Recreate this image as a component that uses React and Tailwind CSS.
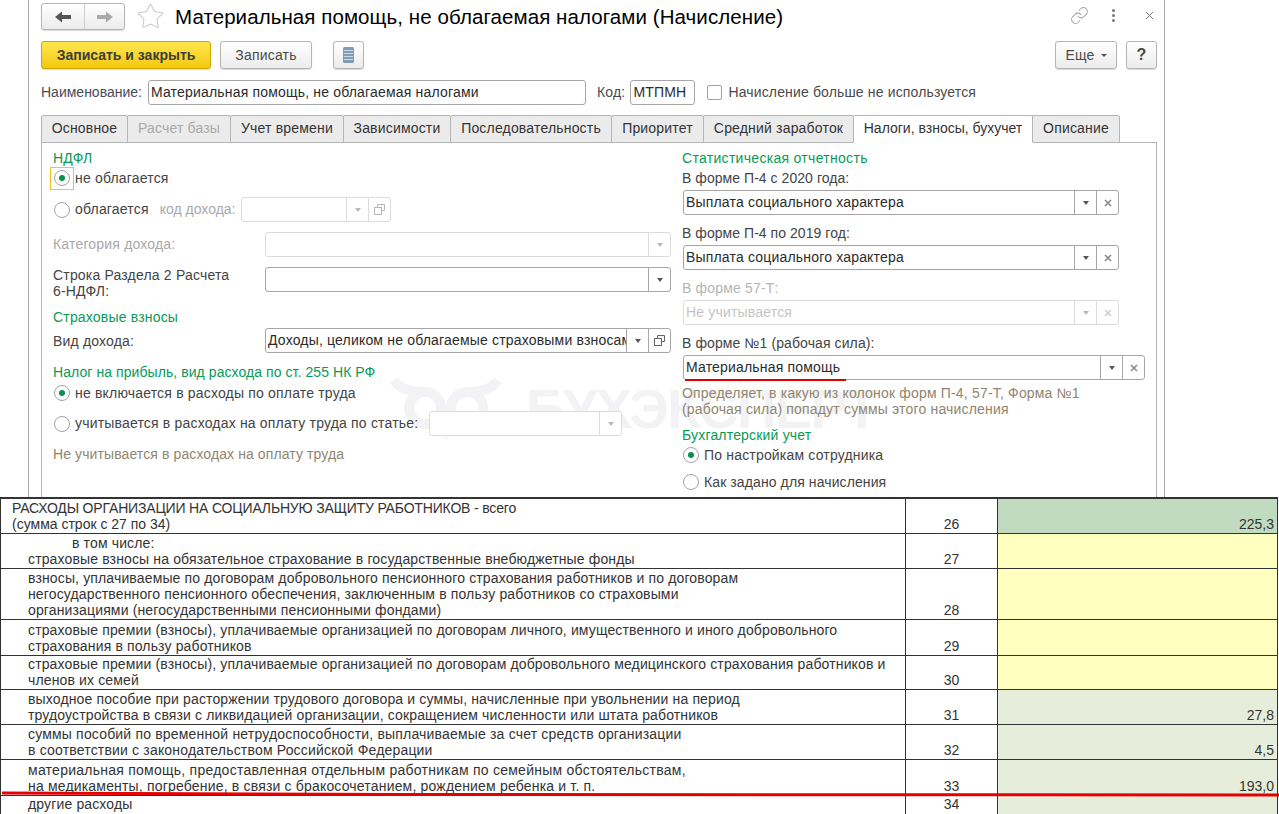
import React from 'react';
import { Link, Star } from 'lucide-react';

const Arrow = ({ left, color }) => (
  <svg width="18" height="14" viewBox="0 0 18 14" className={left ? '' : 'rotate-180'}>
    <path d="M1 7 L8 1.5 V5 H17 V9 H8 V12.5 Z" fill={color} />
  </svg>
);

const Radio = ({ checked }) => (
  <span className="flex h-[16px] w-[16px] shrink-0 items-center justify-center rounded-full border border-[#a3a3a3] bg-white">
    {checked && <span className="h-[6px] w-[6px] rounded-full bg-[#0a8f4c]" />}
  </span>
);

const Caret = ({ disabled }) => (
  <span className={`h-0 w-0 border-x-[3.5px] border-t-[4px] border-x-transparent ${disabled ? 'border-t-[#b8b8b8]' : 'border-t-[#555]'}`} />
);

const Cross = ({ disabled }) => (
  <svg width="8" height="8" viewBox="0 0 8 8">
    <path d="M1 1 L7 7 M7 1 L1 7" stroke={disabled ? '#cfcfcf' : '#8a8a8a'} strokeWidth="1.6" />
  </svg>
);

const Open = ({ disabled }) => (
  <svg width="11" height="11" viewBox="0 0 11 11" fill="none" stroke={disabled ? '#b5b5b5' : '#666'} strokeWidth="1">
    <path d="M3.5 3 V0.5 H10.5 V6.5 H7.5" />
    <rect x="0.5" y="3.5" width="7" height="7" />
  </svg>
);

const Field = ({ width, text, buttons = [], disabled, children }) => (
  <div
    className={`relative flex h-[25px] shrink-0 items-stretch rounded-[3px] border bg-white ${disabled ? 'border-[#dcdcdc]' : 'border-[#a6a6a6]'} ${width}`}
  >
    <div className={`min-w-0 flex-1 overflow-hidden whitespace-nowrap pl-[2px] leading-[23px] ${disabled ? 'text-[#c4c4c4]' : 'text-[#2b2b2b]'}`}>
      {text}
    </div>
    {buttons.map((b, i) => (
      <div key={i} className={`flex w-[22px] shrink-0 items-center justify-center border-l ${disabled ? 'border-[#dcdcdc]' : 'border-[#a6a6a6]'}`}>
        {b === 'caret' && <Caret disabled={disabled} />}
        {b === 'cross' && <Cross disabled={disabled} />}
        {b === 'open' && <Open disabled={disabled} />}
      </div>
    ))}
    {children}
  </div>
);

const Button = ({ className, children }) => (
  <button className={`flex h-[28px] items-center justify-center rounded-[3px] border border-[#b5b5b5] bg-gradient-to-b from-white to-[#ececec] text-[#4a4a4a] shadow-[0_1px_1px_rgba(0,0,0,0.15)] ${className}`}>
    {children}
  </button>
);

const Heading = ({ className = '', children }) => <div className={`leading-[16px] text-[#0a9a57] ${className}`}>{children}</div>;

const tabs = [
  ['Основное', 'w-[87px]'],
  ['Расчет базы', 'w-[104px] text-[#a9a9a9]'],
  ['Учет времени', 'w-[114px]'],
  ['Зависимости', 'w-[108px]'],
  ['Последовательность', 'w-[162px]'],
  ['Приоритет', 'w-[93px]'],
  ['Средний заработок', 'w-[151px]'],
  ['Налоги, взносы, бухучет', 'w-[180px] tracking-normal', true],
  ['Описание', 'w-[88px]'],
];

const rows = [
  { h: 'h-[35px]', pad: 'pl-[11px]', track: ['tracking-[-0.17px]', 'tracking-normal'], lines: ['РАСХОДЫ ОРГАНИЗАЦИИ НА СОЦИАЛЬНУЮ ЗАЩИТУ РАБОТНИКОВ - всего', '(сумма строк с 27 по 34)'], n: 26, bg: 'bg-[#c0dbc0]', v: '225,3' },
  { h: 'h-[35px]', pad: 'pl-[27px]', lines: [<span className="pl-[44px]">в том числе:</span>, 'страховые взносы на обязательное страхование в государственные внебюджетные фонды'], n: 27, bg: 'bg-[#ffffc0]' },
  { h: 'h-[51px]', pad: 'pl-[27px]', lines: ['взносы, уплачиваемые по договорам добровольного пенсионного страхования работников и по договорам', 'негосударственного пенсионного обеспечения, заключенным в пользу работников со страховыми', 'организациями (негосударственными пенсионными фондами)'], n: 28, bg: 'bg-[#ffffc0]' },
  { h: 'h-[36px]', pad: 'pl-[27px]', lines: ['страховые премии (взносы), уплачиваемые организацией по договорам личного, имущественного и иного добровольного', 'страхования в пользу работников'], n: 29, bg: 'bg-[#ffffc0]' },
  { h: 'h-[34px]', pad: 'pl-[27px]', lines: ['страховые премии (взносы), уплачиваемые организацией по договорам добровольного медицинского страхования работников и', 'членов их семей'], n: 30, bg: 'bg-[#ffffc0]' },
  { h: 'h-[35px]', pad: 'pl-[27px]', lines: ['выходное пособие при расторжении трудового договора и суммы, начисленные при увольнении на период', 'трудоустройства в связи с ликвидацией организации, сокращением численности или штата работников'], n: 31, bg: 'bg-[#e6eedb]', v: '27,8' },
  { h: 'h-[35px]', pad: 'pl-[27px]', track: ['tracking-[0.18px]', 'tracking-[0.18px]'], lines: ['суммы пособий по временной нетрудоспособности, выплачиваемые за счет средств организации', 'в соответствии с законодательством Российской Федерации'], n: 32, bg: 'bg-[#e6eedb]', v: '4,5' },
  { h: 'h-[36px]', pad: 'pl-[27px]', track: ['tracking-[0.25px]', 'tracking-[0.18px]'], lines: ['материальная помощь, предоставленная отдельным работникам по семейным обстоятельствам,', 'на медикаменты, погребение, в связи с бракосочетанием, рождением ребенка и т. п.'], n: 33, bg: 'bg-[#e6eedb]', v: '193,0' },
  { h: 'h-[18px]', pad: 'pl-[27px]', last: true, lines: ['другие расходы'], n: 34, bg: 'bg-[#e6eedb]' },
];

const Watermark = () => (
  <div className="absolute left-[361px] top-[378px] flex items-start text-[#f3f3f5]">
    <svg width="112" height="64" viewBox="0 0 112 64" fill="none" stroke="currentColor" strokeWidth="10">
      <circle cx="35" cy="30" r="16" />
      <circle cx="77" cy="30" r="16" />
      <path d="M4 2 C10 12 22 14 35 14 M108 2 C102 12 90 14 77 14" />
      <path d="M47 38 L56 62 L65 38 Z" fill="currentColor" stroke="none" />
    </svg>
    <span className="ml-[24px] mt-[1px] whitespace-nowrap text-[55px] font-bold leading-[60px] tracking-[-1.4px]">БУХЭКСПЕРТ</span>
  </div>
);

export default function App() {
  return (
    <div className="relative h-[814px] w-[1279px] overflow-hidden bg-white text-[14px] text-[#333] [font-family:'Liberation_Sans',Arial,sans-serif]">
      <div className="relative ml-[28px] h-[497px] w-[1137px] overflow-hidden border-x border-[#a8a8a8] pl-[12px] pr-[7px] tracking-[0.18px]">
        <Watermark />

        <div className="relative flex h-[41px] items-start pt-[3px]">
          <div className="flex h-[27px] w-[84px] rounded-[3px] border border-[#b5b5b5] bg-gradient-to-b from-white to-[#ececec] shadow-[0_1px_1px_rgba(0,0,0,0.15)]">
            <div className="flex w-[43px] items-center justify-center border-r border-[#cfcfcf]"><Arrow left color="#555" /></div>
            <div className="flex flex-1 items-center justify-center"><Arrow color="#aaa" /></div>
          </div>
          <Star size={29} strokeWidth={0.9} className="ml-[11px] mt-[-1px] text-[#c9c9c9]" />
          <h1 className="ml-[10px] text-[20.5px] leading-[27px] tracking-[0.08px] text-black">Материальная помощь, не облагаемая налогами (Начисление)</h1>
          <div className="ml-auto flex items-center pt-[3px] text-[#8a8a8a]">
            <Link size={19} strokeWidth={1.3} className="text-[#a8a8a8]" />
            <div className="ml-[23px] flex flex-col gap-[2px]">
              <span className="h-[3px] w-[3px] rounded-full bg-[#777]" />
              <span className="h-[3px] w-[3px] rounded-full bg-[#777]" />
              <span className="h-[3px] w-[3px] rounded-full bg-[#777]" />
            </div>
            <svg width="9" height="9" viewBox="0 0 9 9" className="ml-[30px] mr-[3px]">
              <path d="M1 1 L8 8 M8 1 L1 8" stroke="#777" strokeWidth="1" />
            </svg>
          </div>
        </div>

        <div className="relative flex h-[39px] items-start">
          <button className="flex h-[28px] w-[170px] items-center justify-center rounded-[3px] border border-[#c9a800] bg-gradient-to-b from-[#ffe74a] to-[#f4c800] font-bold tracking-normal text-[#3d3d3d] shadow-[0_1px_1px_rgba(0,0,0,0.15)]">
            Записать и закрыть
          </button>
          <Button className="ml-[9px] w-[92px]">Записать</Button>
          <Button className="ml-[21px] w-[31px]">
            <svg width="11" height="16" viewBox="0 0 11 16">
              <rect x="0" y="0" width="11" height="16" rx="1.5" fill="#7f9cb5" />
              <path d="M1 3.5 H10 M1 6.5 H10 M1 9.5 H10 M1 12.5 H10" stroke="#cfdbe6" strokeWidth="1" />
            </svg>
          </Button>
          <Button className="ml-auto w-[62px] gap-[6px]">
            Еще <span className="h-0 w-0 border-x-[3.5px] border-t-[3.5px] border-x-transparent border-t-[#555]" />
          </Button>
          <Button className="ml-[9px] w-[31px] text-[16px] font-bold">?</Button>
        </div>

        <div className="relative flex h-[35px] items-start">
          <span className="mr-[6px] leading-[25px] tracking-normal text-[#4a4a55]">Наименование:</span>
          <Field width="w-[438px]" text="Материальная помощь, не облагаемая налогами" />
          <span className="ml-[11px] mr-[5px] leading-[25px] text-[#4a4a55]">Код:</span>
          <Field width="w-[65px]" text="МТПМН" />
          <span className="ml-[12px] mt-[5px] h-[15px] w-[15px] rounded-[2px] border border-[#a3a3a3] bg-white" />
          <span className="ml-[6px] leading-[25px] tracking-[0.15px] text-[#4a4a4a]">Начисление больше не используется</span>
        </div>

        <div className="relative flex h-[28px]">
          {tabs.map(([name, cls, active]) => (
            <div
              key={name}
              className={`-mr-px flex items-center justify-center rounded-t-[2px] border pb-[2px] border-[#b5b5b5] ${cls} ${active ? 'z-10 border-b-white bg-white' : 'bg-[#ebebeb]'}`}
            >
              {name}
            </div>
          ))}
        </div>

        <div className="relative -mt-px flex h-[400px] w-[1116px] border border-[#b5b5b5] pl-[11px]">
          <div className="w-[629px] shrink-0 pt-[7px]">
            <Heading>НДФЛ</Heading>
            <div className="flex h-[24px] items-center gap-[5px] pl-[1px]">
              <span className="-m-[4px] mr-[-4px] flex h-[23px] w-[24px] items-center justify-center border border-[#f5c518]"><Radio checked /></span>
              <span className="text-[#444]">не облагается</span>
            </div>
            <div className="mt-[7px] flex h-[25px] items-center pl-[1px]">
              <Radio />
              <span className="ml-[5px] text-[#444]">облагается</span>
              <span className="ml-[11px] tracking-normal text-[#a9a9a9]">код дохода:</span>
              <span className="ml-[6px]"><Field disabled width="w-[150px]" buttons={['caret', 'open']} /></span>
            </div>
            <div className="mt-[10px] flex h-[25px] items-center">
              <span className="w-[212px] text-[#a9a9a9]">Категория дохода:</span>
              <Field disabled width="w-[406px]" buttons={['caret']} />
            </div>
            <div className="mt-[10px] flex">
              <span className="w-[212px] leading-[16px] text-[#444]">Строка Раздела 2 Расчета<br />6-НДФЛ:</span>
              <Field width="w-[406px]" buttons={['caret']} />
            </div>
            <Heading className="mt-[10px]">Страховые взносы</Heading>
            <div className="mt-[3px] flex h-[25px] items-center">
              <span className="w-[212px] pt-[1px] text-[#444]">Вид дохода:</span>
              <Field width="w-[406px]" text="Доходы, целиком не облагаемые страховыми взносами" buttons={['caret', 'open']} />
            </div>
            <Heading className="mt-[11px] tracking-[0.07px]">Налог на прибыль, вид расхода по ст. 255 НК РФ</Heading>
            <div className="mt-[3px] flex h-[20px] items-center gap-[5px] pl-[1px]">
              <Radio checked />
              <span className="text-[#444]">не включается в расходы по оплате труда</span>
            </div>
            <div className="mt-[8px] flex h-[25px] items-center gap-[5px] pl-[1px]">
              <Radio />
              <span className="text-[#444]">учитывается в расходах на оплату труда по статье:</span>
              <span className="ml-[6px]"><Field disabled width="w-[193px]" buttons={['caret']} /></span>
            </div>
            <div className="mt-[10px] leading-[16px] tracking-[0.1px] text-[#8f8570]">Не учитывается в расходах на оплату труда</div>
          </div>

          <div className="flex-1 pt-[7px]">
            <Heading className="tracking-[0.3px]">Статистическая отчетность</Heading>
            <div className="mt-[4px] leading-[16px] tracking-[0.05px] text-[#444]">В форме П-4 с 2020 года:</div>
            <div className="ml-px mt-[4px]"><Field width="w-[436px]" text="Выплата социального характера" buttons={['caret', 'cross']} /></div>
            <div className="mt-[10px] leading-[16px] tracking-[0.05px] text-[#444]">В форме П-4 по 2019 год:</div>
            <div className="ml-px mt-[4px]"><Field width="w-[436px]" text="Выплата социального характера" buttons={['caret', 'cross']} /></div>
            <div className="mt-[10px] leading-[16px] text-[#b5b5b5]">В форме 57-Т:</div>
            <div className="ml-px mt-[4px]"><Field disabled width="w-[436px]" text="Не учитывается" buttons={['caret', 'cross']} /></div>
            <div className="mt-[10px] leading-[16px] tracking-[0.1px] text-[#444]">В форме №1 (рабочая сила):</div>
            <div className="ml-px mt-[4px]">
              <Field width="w-[462px]" text="Материальная помощь" buttons={['caret', 'cross']}>
                <span className="absolute -bottom-[2px] left-[1px] h-[2px] w-[161px] bg-[#e00000]" />
              </Field>
            </div>
            <div className="mt-[5px] leading-[16px] text-[#8f8570]">Определяет, в какую из колонок форм П-4, 57-Т, Форма №1<br />(рабочая сила) попадут суммы этого начисления</div>
            <Heading className="mt-[10px]">Бухгалтерский учет</Heading>
            <div className="mt-[2px] flex h-[20px] items-center gap-[5px] pl-[1px]">
              <Radio checked />
              <span className="text-[#444]">По настройкам сотрудника</span>
            </div>
            <div className="mt-[7px] flex h-[20px] items-center gap-[5px] pl-[1px]">
              <Radio />
              <span className="tracking-[0.1px] text-[#444]">Как задано для начисления</span>
            </div>
          </div>
        </div>
      </div>

      <div className="w-[1278px] border-x border-b border-t-2 border-[#333]">
        {rows.map((r, i) => (
          <div key={r.n} className={`flex ${r.h} ${i < rows.length - 1 ? 'border-b border-[#333]' : ''}`}>
            <div className={`flex w-[904px] flex-col justify-end leading-[16px] text-[#333] ${r.last ? 'pb-[2px]' : 'pb-px'} ${r.pad}`}>
              {r.lines.map((l, j) => (
                <div key={j} className={`whitespace-nowrap ${r.track ? r.track[j] : 'tracking-[0.14px]'}`}>{l}</div>
              ))}
            </div>
            <div className={`flex w-[93px] items-end justify-center border-x border-[#333] leading-[16px] ${r.last ? 'pb-[2px]' : 'pb-px'}`}>{r.n}</div>
            <div className={`flex flex-1 items-end justify-end pb-px pr-[3px] leading-[16px] ${r.bg}`}>{r.v}</div>
          </div>
        ))}
      </div>

      <svg className="absolute left-0 top-[790px]" width="1279" height="10">
        <path d="M2 3 L400 4.5 L1279 5" stroke="#e60000" strokeWidth="3" fill="none" />
      </svg>
    </div>
  );
}
